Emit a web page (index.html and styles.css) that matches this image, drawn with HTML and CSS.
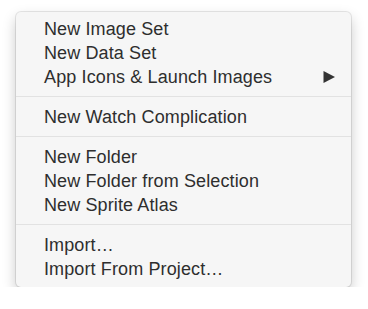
FILE: index.html
```html
<!DOCTYPE html>
<html lang="en">
<head>
  <meta charset="UTF-8" />
  <meta name="viewport" content="width=device-width, initial-scale=1.0"/>
  <title>Asset Catalog Menu</title>
  <link rel="stylesheet" href="styles.css">
</head>
<body>

  <!-- Context menu -->
  <div class="menu">
    <div class="menu-item">New Image Set</div>
    <div class="menu-item">New Data Set</div>
    <div class="menu-item submenu">
      <span>App Icons &amp; Launch Images</span>
      <svg class="arrow" width="12" height="12" viewBox="0 0 12 12">
        <polygon points="0.5,0 12,6 0.5,12" />
      </svg>
    </div>

    <div class="separator"></div>

    <div class="menu-item">New Watch Complication</div>

    <div class="separator"></div>

    <div class="menu-item">New Folder</div>
    <div class="menu-item">New Folder from Selection</div>
    <div class="menu-item">New Sprite Atlas</div>

    <div class="separator"></div>

    <div class="menu-item">Import…</div>
    <div class="menu-item">Import From Project…</div>
  </div>

</body>
</html>
```

FILE: styles.css
```css
* {
  box-sizing: border-box;
}

body {
  background-color: #fff;
  font-family: "Liberation Sans", Arial, sans-serif;
  margin: 0;
  padding: 12px 0 0 16px;
}

.menu {
  width: 335px;
  height: 275px;
  padding: 5px 0 6px;
  background-color: #f6f6f6;
  border-radius: 5px;
  box-shadow: 0 0 0 1px rgba(0, 0, 0, 0.09), 0 6px 14px rgba(0, 0, 0, 0.22);
}

.menu-item {
  height: 24px;
  line-height: 24px;
  padding: 0 16px 0 28px;
  font-size: 18px;
  letter-spacing: 0.12px;
  color: #2e2e2e;
  white-space: nowrap;
}

.submenu {
  display: flex;
  justify-content: space-between;
  align-items: center;
}

.arrow {
  fill: #333;
}

.separator {
  height: 1px;
  margin: 7px 0 8px;
  background-color: #e2e2e2;
}
```
